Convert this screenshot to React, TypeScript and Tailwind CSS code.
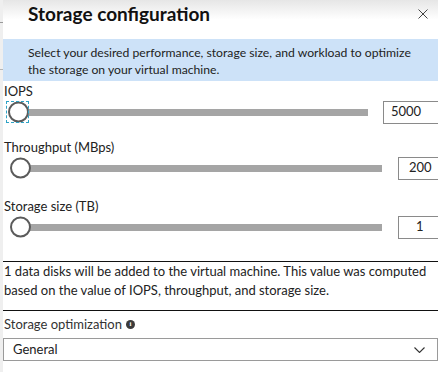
import React from 'react';

const font = { fontFamily: 'Lato, "Noto Sans", sans-serif' };

type SliderRowProps = {
    value: string;
    trackLeft: string;
    trackWidth: string;
    boxGap: string;
    textPad: string;
    focused?: boolean;
};

const SliderRow = ({ value, trackLeft, trackWidth, boxGap, textPad, focused }: SliderRowProps) => (
    <div className={`flex items-center h-[24px] ${trackLeft}`}>
        <div className={`relative h-full flex items-center shrink-0 ${trackWidth}`}>
            <div className="ml-[10px] flex-1 h-[7px] bg-[#a5a5a5]" />
            <div className="absolute left-0 top-1/2 -translate-y-1/2 w-[21px] h-[21px] rounded-full border-2 border-[#5b5b5b] bg-white" />
            {focused && (
                <div className="absolute left-[-2px] top-[1px] w-[23px] h-[22px] border border-dashed border-[#2ea3c6]" />
            )}
        </div>
        <div className={`shrink-0 w-[80px] h-[23px] border border-[#8a8a8a] flex items-center text-[13px] text-[#222] ${boxGap} ${textPad}`}>
            {value}
        </div>
    </div>
);

const App = () => {
    return (
        <div className="w-[438px] h-[372px] overflow-hidden flex bg-white text-[#1a1a1a]" style={font}>
            {/* blade behind, left edge */}
            <div className="w-[3px] shrink-0 bg-[#efefef] flex flex-col">
                <div className="h-[22px]" />
                <div className="h-px bg-[#9a9a9a]" />
                <div className="h-[46px]" />
                <div className="h-px bg-[#b5b5b5]" />
            </div>

            <div className="flex-1 flex flex-col min-w-0">
                {/* Header */}
                <div className="h-[39px] shrink-0 flex items-start justify-between bg-gradient-to-b from-[#e6e6e6] via-white to-white">
                    <h1 className="pl-[25px] pt-[2px] text-[19px] leading-[24px] font-bold text-[#111]">
                        Storage configuration
                    </h1>
                    <svg className="mt-[9px] mr-[10px]" width="10" height="10" viewBox="0 0 10 10">
                        <path d="M0.5 0.5 L9.5 9.5 M9.5 0.5 L0.5 9.5" stroke="#444" strokeWidth="1" fill="none" />
                    </svg>
                </div>

                {/* Info bar */}
                <div className="h-[42px] shrink-0 bg-[#cde2f8] pl-[25px] pt-[5px] text-[12.2px] leading-[17px] text-[#222]">
                    Select your desired performance, storage size, and workload to optimize
                    <br />
                    the storage on your virtual machine.
                </div>

                {/* IOPS */}
                <div className="mt-[2px] pl-[1px] text-[13px] leading-[17px] text-[#222]">IOPS</div>
                <SliderRow value="5000" trackLeft="pl-[5px]" trackWidth="w-[360px]" boxGap="ml-[15px]" textPad="pl-[7px]" focused />

                {/* Throughput */}
                <div className="mt-[15px] pl-[1px] text-[13px] leading-[17px] text-[#222]">Throughput (MBps)</div>
                <SliderRow value="200" trackLeft="pl-[7px]" trackWidth="w-[372px]" boxGap="ml-[16px]" textPad="pl-[10px]" />

                {/* Storage size */}
                <div className="mt-[18px] pl-[1px] text-[13px] leading-[17px] text-[#222]">Storage size (TB)</div>
                <SliderRow value="1" trackLeft="pl-[7px]" trackWidth="w-[372px]" boxGap="ml-[16px]" textPad="pl-[17px]" />

                <div className="mt-[22px] border-t border-[#111]" />
                <p className="pl-[1px] text-[13px] leading-[19px] text-[#222]">
                    1 data disks will be added to the virtual machine. This value was computed
                    <br />
                    based on the value of IOPS, throughput, and storage size.
                </p>
                <div className="mt-[10px] border-t border-[#111]" />

                {/* Storage optimization */}
                <div className="mt-[5px] pl-[1px] flex items-center gap-[4px] text-[13px] leading-[17px] text-[#333]">
                    <span>Storage optimization</span>
                    <span className="w-[9px] h-[9px] rounded-full bg-[#3b3b3b] text-white text-[7px] leading-[9px] font-bold flex items-center justify-center" style={{ fontFamily: '"Liberation Serif", serif' }}>
                        i
                    </span>
                </div>
                <div className="mt-[5px] h-[23px] border border-[#9a9a9a] flex items-center justify-between pl-[9px] pr-[12px] text-[13px] text-[#222]">
                    <span>General</span>
                    <svg width="11" height="6" viewBox="0 0 11 6">
                        <path d="M0.5 0.5 L5.5 5.5 L10.5 0.5" stroke="#333" strokeWidth="1.1" fill="none" />
                    </svg>
                </div>
            </div>
        </div>
    );
};

export default App;
